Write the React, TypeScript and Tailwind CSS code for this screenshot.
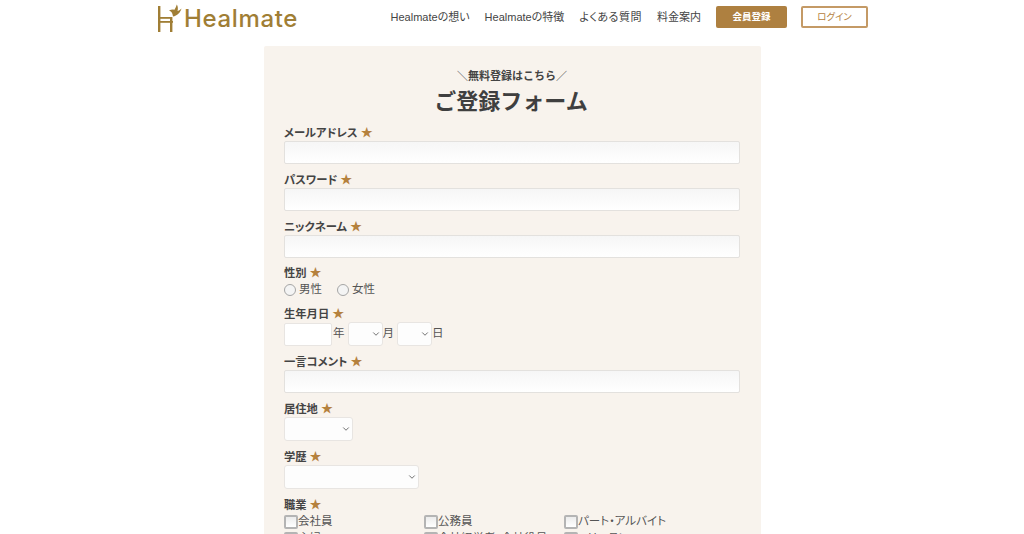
import { ChevronDown } from "lucide-react";

const font = { fontFamily: '"Liberation Sans", "Noto Sans CJK JP", sans-serif' };

function Logo() {
  return (
    <div className="flex items-end h-[34px]">
      <svg width="27" height="32" viewBox="0 0 27 32" className="mb-[1px]" fill="none">
        <g fill="#a07e35">
          <rect x="1" y="5" width="2.4" height="26" />
          <rect x="1" y="16" width="14" height="1.8" />
          <rect x="1" y="20" width="15" height="1.8" />
          <rect x="13" y="16" width="2.4" height="15" />
          <path d="M12 9.5 C15 10.5 15.5 12.5 16 15.5 C20 15 23.5 11.5 24.5 7.5 C23 9 21.5 9.8 20.5 9.9 C21.2 8 21 5.5 19.8 3.5 C19.2 5.8 18.3 7.5 17.2 9 C16 8 14 8.8 12 9.5 Z" />
        </g>
      </svg>
      <span
        className="text-[24px] leading-[30px] text-[#a07e35] font-medium tracking-[0.65px]"
        style={{ fontFamily: "Inter, sans-serif" }}
      >
        Healmate
      </span>
    </div>
  );
}

function Star() {
  return <span className="text-[#b5813d] text-[12px] ml-[3px] font-normal">★</span>;
}

function Label({ children, mt = "" }: { children: string; mt?: string }) {
  return (
    <div className={`h-[18px] flex items-center translate-y-[1px] text-[11.3px] font-bold text-[#444444] [font-feature-settings:'palt'] ${mt}`}>
      {children}
      <Star />
    </div>
  );
}

function TextField() {
  return (
    <input
      type="text"
      className="block w-full h-[23px] bg-gradient-to-b from-[#f6f6f6] to-white border border-[#e3e1de] rounded-[2px]"
    />
  );
}

function Select({ w }: { w: string }) {
  return (
    <div className={`relative h-[24px] ${w}`}>
      <select className="appearance-none w-full h-full bg-[#fdfdfd] border border-[#e8e5e2] rounded-[3px]" />
      <ChevronDown size={10} strokeWidth={2} className="absolute right-[2px] top-[7px] text-[#555555]" />
    </div>
  );
}

function Radio({ text }: { text: string }) {
  return (
    <label className="flex items-center gap-[3px] mr-[15px]">
      <input
        type="radio"
        className="appearance-none w-[12px] h-[12px] rounded-full bg-[#f4f4f4] border border-[#a5a5a5]"
      />
      <span>{text}</span>
    </label>
  );
}

function Check({ text }: { text: string }) {
  return (
    <label className="flex items-center h-[17px] w-[140px]">
      <input
        type="checkbox"
        className="appearance-none shrink-0 w-[14px] h-[14px] rounded-[2px] bg-gradient-to-b from-[#ececec] to-white border-2 border-[#b4b4b4]"
      />
      <span className="text-[11.5px] text-[#555555] whitespace-nowrap [font-feature-settings:'palt']">{text}</span>
    </label>
  );
}

const nav = [
  { label: "Healmateの想い", cls: "" },
  { label: "Healmateの特徴", cls: "" },
  { label: "よくある質問", cls: "tracking-[0.5px]" },
  { label: "料金案内", cls: "" },
];

export default function App() {
  return (
    <div className="h-[534px] overflow-hidden bg-white" style={font}>
      <header className="w-[711px] h-[46px] ml-[157px] flex items-start justify-between">
        <Logo />
        <nav className="flex items-center h-[34px] text-[11px] text-[#444444] [font-feature-settings:'palt']">
          {nav.map((n) => (
            <a key={n.label} className={`mr-[15px] whitespace-nowrap ${n.cls}`}>
              {n.label}
            </a>
          ))}
          <a className="w-[71px] h-[22px] flex items-center justify-center bg-[#ae8040] rounded-[2px] text-white text-[9.5px] font-bold">
            会員登録
          </a>
          <a className="w-[67px] h-[22px] ml-[14px] flex items-center justify-center bg-white border-2 border-[#c49a66] rounded-[2px] text-[#b5813d] text-[9.5px]">
            ログイン
          </a>
        </nav>
      </header>

      <main className="w-[497px] ml-[264px] pl-[20px] pr-[21px] pt-[22px] pb-10 bg-[#f8f3ed] rounded-t-[2px]">
        <p className="text-center text-[11px] leading-[16px] font-bold text-[#444444]">＼無料登録はこちら／</p>
        <h1 className="text-center text-[22px] leading-[32px] font-bold text-[#3f3f3f] mt-[2px] mb-[5px] pr-[2px]">ご登録フォーム</h1>

        <div className="text-[#555555]">
          <Label>メールアドレス</Label>
          <TextField />
          <Label mt="mt-[6px]">パスワード</Label>
          <TextField />
          <Label mt="mt-[6px]">ニックネーム</Label>
          <TextField />
          <Label mt="mt-[5px]">性別</Label>
          <div className="flex items-center h-[18px] text-[11.5px]">
            <Radio text="男性" />
            <Radio text="女性" />
          </div>
          <Label mt="mt-[5px]">生年月日</Label>
          <div className="flex items-center h-[24px] text-[11.5px]">
            <input type="text" className="w-[48px] h-[23px] bg-white border border-[#e8e5e2] rounded-[2px]" />
            <span className="ml-[1px] mr-[3px]">年</span>
            <Select w="w-[35px]" />
            <span className="mr-[3px]">月</span>
            <Select w="w-[35px]" />
            <span>日</span>
          </div>
          <Label mt="mt-[6px]">一言コメント</Label>
          <TextField />
          <Label mt="mt-[6px]">居住地</Label>
          <Select w="w-[69px]" />
          <Label mt="mt-[6px]">学歴</Label>
          <Select w="w-[135px]" />
          <Label mt="mt-[6px]">職業</Label>
          <div className="grid grid-cols-[140px_140px_140px]">
            <Check text="会社員" />
            <Check text="公務員" />
            <Check text="パート・アルバイト" />
            <Check text="主婦" />
            <Check text="会社経営者・会社役員" />
            <Check text="フリーランス" />
          </div>
        </div>
      </main>
    </div>
  );
}
